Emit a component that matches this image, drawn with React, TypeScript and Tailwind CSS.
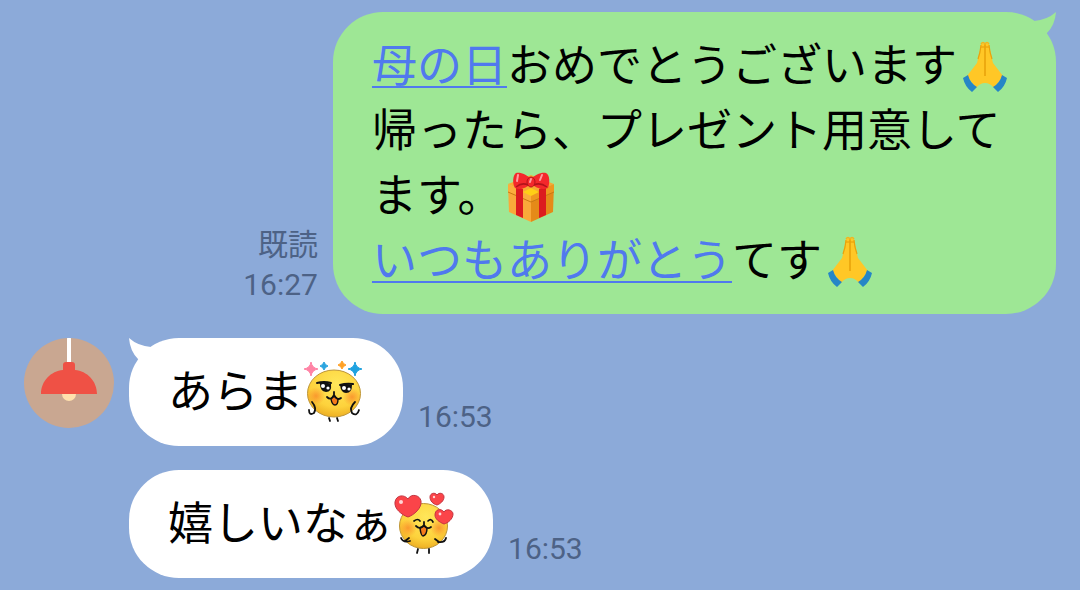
import React from 'react'

interface IconProps {
  className?: string
}

function PrayIcon({ className }: IconProps) {
  return (
    <svg viewBox="0 0 60 60" className={className} role="img" aria-label="folded hands">
      <path d="M24 9 L28 8 L32 9 L34 20 L36 28 L46 41 L37 53 Q33 48 28 48 Q23 48 19 53 L10 41 L20 28 L22 20 Z" fill="#ffc726" />
      <path d="M28 9 V41" stroke="#e9a30c" strokeWidth="1.6" />
      <path d="M24 10 L23 17 L21 24 M32 10 L33 17 L35 24" stroke="#e9a30c" strokeWidth="1.2" fill="none" />
      <path d="M24 12 H32" stroke="#e9a30c" strokeWidth="1.2" />
      <path d="M24 9 Q26 6 28 9 Q30 6 32 9" stroke="#f5b41c" strokeWidth="1.5" fill="none" />
      <path d="M11 40 Q13 48 20 52 L15 57 Q8 52 6 43 Z" fill="#2686c6" />
      <path d="M45 40 Q43 48 36 52 L41 57 Q48 52 50 43 Z" fill="#2686c6" />
    </svg>
  )
}

function GiftIcon({ className }: IconProps) {
  return (
    <svg viewBox="-5 0 60 60" className={className} role="img" aria-label="gift">
      <path d="M1 20 L24 30 V57 L2 47 Z" fill="#f9a93a" />
      <path d="M47 20 L24 30 V57 L46 47 Z" fill="#e58a18" />
      <path d="M1 19 L24 10 L47 19 L24 30 Z" fill="#f7a934" />
      <path d="M1 19 L24 29 V37 L1 27 Z" fill="#fbae3c" />
      <path d="M47 19 L24 29 V37 L47 27 Z" fill="#ee981f" />
      <path d="M1 27 L24 37 L47 27" stroke="#c97a14" strokeWidth="1" fill="none" />
      <path d="M9 21 L16 24 V53 L9 50 Z M39 21 L32 24 V53 L39 50 Z" fill="#dc1b1f" />
      <path d="M24 18 C19 24 13 25 8 23 C5 18 6 10 9 8 C14 7 20 10 24 14 C28 10 34 7 39 8 C43 10 43 18 41 23 C36 25 29 24 24 18 Z" fill="#f4282b" />
      <path d="M9 22 Q15 17 21 20 M40 22 Q33 17 27 20" stroke="#b3131a" strokeWidth="1.5" fill="none" />
      <ellipse cx="24" cy="17" rx="4" ry="5" fill="#f4282b" stroke="#b3131a" strokeWidth="1" />
      <path d="M11 10 L10 16 M35 10 L33 15 M24 14 L23 17" stroke="#ff9ba0" strokeWidth="2" strokeLinecap="round" />
      <path d="M16 27 L24 23 L32 27 L24 31 Z" fill="#ffcf16" />
    </svg>
  )
}

function FaceGradient({ id }: { id: string }) {
  return (
    <defs>
      <radialGradient id={id} cx="0.55" cy="0.3" r="0.7">
        <stop offset="0" stopColor="#ffe75a" />
        <stop offset="0.7" stopColor="#fdd23c" />
        <stop offset="1" stopColor="#eeb024" />
      </radialGradient>
      <radialGradient id={`${id}-cheek`}>
        <stop offset="0" stopColor="#f98a2a" stopOpacity="0.8" />
        <stop offset="1" stopColor="#f98a2a" stopOpacity="0" />
      </radialGradient>
    </defs>
  )
}

function SparkleFace({ className }: IconProps) {
  return (
    <svg viewBox="0 -1 80 80" className={className} role="img" aria-label="sparkling face">
      <FaceGradient id="sparkle" />
      <ellipse cx="39" cy="43.500" rx="26.500" ry="23.500" fill="url(#sparkle)" stroke="#bd9537" strokeWidth="1" />
      <circle cx="21" cy="46" r="9" fill="url(#sparkle-cheek)" />
      <circle cx="57" cy="47" r="9" fill="url(#sparkle-cheek)" />
      <path d="M16 12 Q17 18 23 19 Q17 20 16 26 Q15 20 9 19 Q15 18 16 12 Z" fill="#ff83a5" stroke="#ff83a5" strokeWidth="1" />
      <path d="M29 12 Q30 15 33 16 Q30 17 29 20 Q28 17 25 16 Q28 15 29 12 Z" fill="#2ca5df" stroke="#2ca5df" strokeWidth="1" />
      <path d="M47 11 Q48 14 51 15 Q48 16 47 19 Q46 16 43 15 Q46 14 47 11 Z" fill="#ffa126" stroke="#ffa126" strokeWidth="1" />
      <path d="M60 12 Q61 18 67 19 Q61 20 60 26 Q59 20 53 19 Q59 18 60 12 Z" fill="#1fa2e0" stroke="#1fa2e0" strokeWidth="1" />
      <path d="M24 33 Q30 31 36 34 Q37 42 31 42 Q25 41 25 34 Z" fill="#111" />
      <path d="M45 35 Q51 33 57 35 Q57 43 51 43 Q46 43 45 35 Z" fill="#111" />
      <path d="M22 33 Q29 31 36 33 M45 35 Q51 33 58 34" stroke="#111" strokeWidth="2" fill="none" strokeLinecap="round" />
      <circle cx="28" cy="36" r="2" fill="#fff" />
      <circle cx="33" cy="38" r="1.600" fill="#fff" />
      <circle cx="49" cy="38" r="2" fill="#fff" />
      <circle cx="54" cy="39" r="1.600" fill="#fff" />
      <path d="M36 49 Q37 55 40 55 Q43 55 43 49 L39 46 Z" fill="#f57a1b" stroke="#111" strokeWidth="1.400" />
      <path d="M32 47 Q36 51 39 45 Q42 51 46 48 M39 45 V42" stroke="#111" strokeWidth="1.800" fill="none" strokeLinecap="round" />
      <path d="M17 52 Q22 58 19 63 Q14 66 14 60 M60 52 Q54 58 57 63 Q62 67 64 60" stroke="#111" strokeWidth="1.800" fill="none" strokeLinecap="round" />
      <path d="M34 68 L35 71 M42 68 L43 71" stroke="#111" strokeWidth="1.800" strokeLinecap="round" />
    </svg>
  )
}

function HeartFace({ className }: IconProps) {
  return (
    <svg viewBox="0 -1 80 80" className={className} role="img" aria-label="face with hearts">
      <FaceGradient id="heart" />
      <ellipse cx="38.500" cy="44" rx="24" ry="22.500" fill="url(#heart)" stroke="#bd9537" strokeWidth="1" />
      <circle cx="23" cy="46" r="9" fill="url(#heart-cheek)" />
      <circle cx="54" cy="46" r="9" fill="url(#heart-cheek)" />
      <g fill="#fb4449" stroke="#c33440" strokeWidth="1">
        <path d="M23 17 C26 11 35 13 36 19 C37 26 29 33 23 35 C17 33 9 27 10 20 C11 13 19 12 23 17 Z" />
        <path d="M52 13 C54 10 59 11 59 15 C59 19 55 22 52 23 C48 22 45 19 45 15 C45 11 50 10 52 13 Z" />
        <path d="M59 30 C61 26 68 28 68 32 C68 37 63 41 59 42 C54 40 50 37 50 33 C50 27 56 26 59 30 Z" />
      </g>
      <circle cx="16" cy="20" r="2" fill="#ffd5d5" />
      <circle cx="49" cy="15" r="1.200" fill="#ffd5d5" />
      <circle cx="55" cy="32" r="1.400" fill="#ffd5d5" />
      <path d="M29 39 Q33 36 35 39 M43 39 Q46 36 48 40" stroke="#111" strokeWidth="1.700" fill="none" strokeLinecap="round" />
      <path d="M35 46 Q36 54 38 54 Q42 53 42 46 L39 44 Z" fill="#f57a1b" stroke="#111" strokeWidth="1.500" />
      <path d="M31 44 Q35 48 39 43 Q42 48 46 45 M39 43 V40" stroke="#111" strokeWidth="1.800" fill="none" strokeLinecap="round" />
      <path d="M16 56 Q18 61 25 59 M20 59 L24 56 M61 56 Q60 61 53 60 M50 57 L54 60" stroke="#111" strokeWidth="1.800" fill="none" strokeLinecap="round" />
      <path d="M33 67 L32 71 M44 67 V71" stroke="#111" strokeWidth="1.800" strokeLinecap="round" />
    </svg>
  )
}

function LampAvatar() {
  return (
    <svg viewBox="0 0 90 90" className="size-[90px] rounded-full bg-[#c9a791]" role="img" aria-label="avatar">
      <circle cx="45" cy="56" r="7" fill="#ffe0ad" />
      <rect x="43" y="0" width="4" height="25" fill="#fff" />
      <path d="M17 56 C17 43 27 33 39 32 V27 Q39 24 42 24 H48 Q51 24 51 27 V32 C63 33 73 43 73 56 Z" fill="#ef5145" />
    </svg>
  )
}

function Tail({ className }: IconProps) {
  return (
    <svg viewBox="0 0 40 48" className={className} aria-hidden="true">
      <path d="M0 0 Q9 8 22 9 L36 22 L20 36 L9 21 Q1 13 0 0 Z" fill="currentColor" />
    </svg>
  )
}

interface ReceivedMessage {
  id: number
  text: string
  time: string
  Sticker: (props: IconProps) => React.JSX.Element
  avatar: boolean
}

const RECEIVED: ReceivedMessage[] = [
  { id: 1, text: 'あらま', time: '16:53', Sticker: SparkleFace, avatar: true },
  { id: 2, text: '嬉しいなぁ', time: '16:53', Sticker: HeartFace, avatar: false },
]

const EMOJI = 'inline-block size-[60px] -mt-[13px] -mb-[3px] align-middle'
const LINK = 'text-[#5079ee] underline decoration-2 underline-offset-4 [text-decoration-skip-ink:none]'
const META = "pb-[9px] font-[Roboto,'Noto_Sans_CJK_JP',sans-serif] text-[30px] leading-[40px] text-[#4d6286]"

export default function App() {
  return (
    <main
      lang="ja"
      className="flex min-h-screen flex-col gap-6 bg-[#8caad9] px-6 py-3 font-['Noto_Sans_CJK_JP',sans-serif] text-[45px] leading-[65px] text-black"
    >
      {/* Sent */}
      <div className="flex items-end justify-end gap-[15px]">
        <div className={`text-right ${META}`}>
          <p>既読</p>
          <time className="block">16:27</time>
        </div>
        <div className="relative rounded-[50px] bg-[#9ee795] px-[39px] pt-[18px] pb-6">
          <Tail className="absolute top-0 right-0 h-12 w-10 -scale-x-100 text-[#9ee795]" />
          <p className="whitespace-nowrap">
            <a href="#mothers-day" className={LINK}>母の日</a>おめでとうございます<PrayIcon className={EMOJI} />
          </p>
          <p>帰ったら、プレゼント用意して</p>
          <p>ます。<GiftIcon className={EMOJI} /></p>
          <p>
            <a href="#thanks" className={LINK}>いつもありがとう</a>てす<PrayIcon className={EMOJI} />
          </p>
        </div>
      </div>

      {/* Received */}
      {RECEIVED.map(({ id, text, time, Sticker, avatar }) => (
        <div key={id} className="flex gap-[15px]">
          <div className="w-[90px] shrink-0">{avatar && <LampAvatar />}</div>
          <div className="relative flex items-center rounded-[50px] bg-white px-[39px] pt-[18px] pb-[25px]">
            {avatar && <Tail className="absolute top-0 left-0 h-12 w-10 text-white" />}
            <p className="whitespace-nowrap">{text}</p>
            <Sticker className="-my-2 -mr-[11px] -ml-2 size-20 shrink-0" />
          </div>
          <time className={`self-end ${META}`}>{time}</time>
        </div>
      ))}
    </main>
  )
}
